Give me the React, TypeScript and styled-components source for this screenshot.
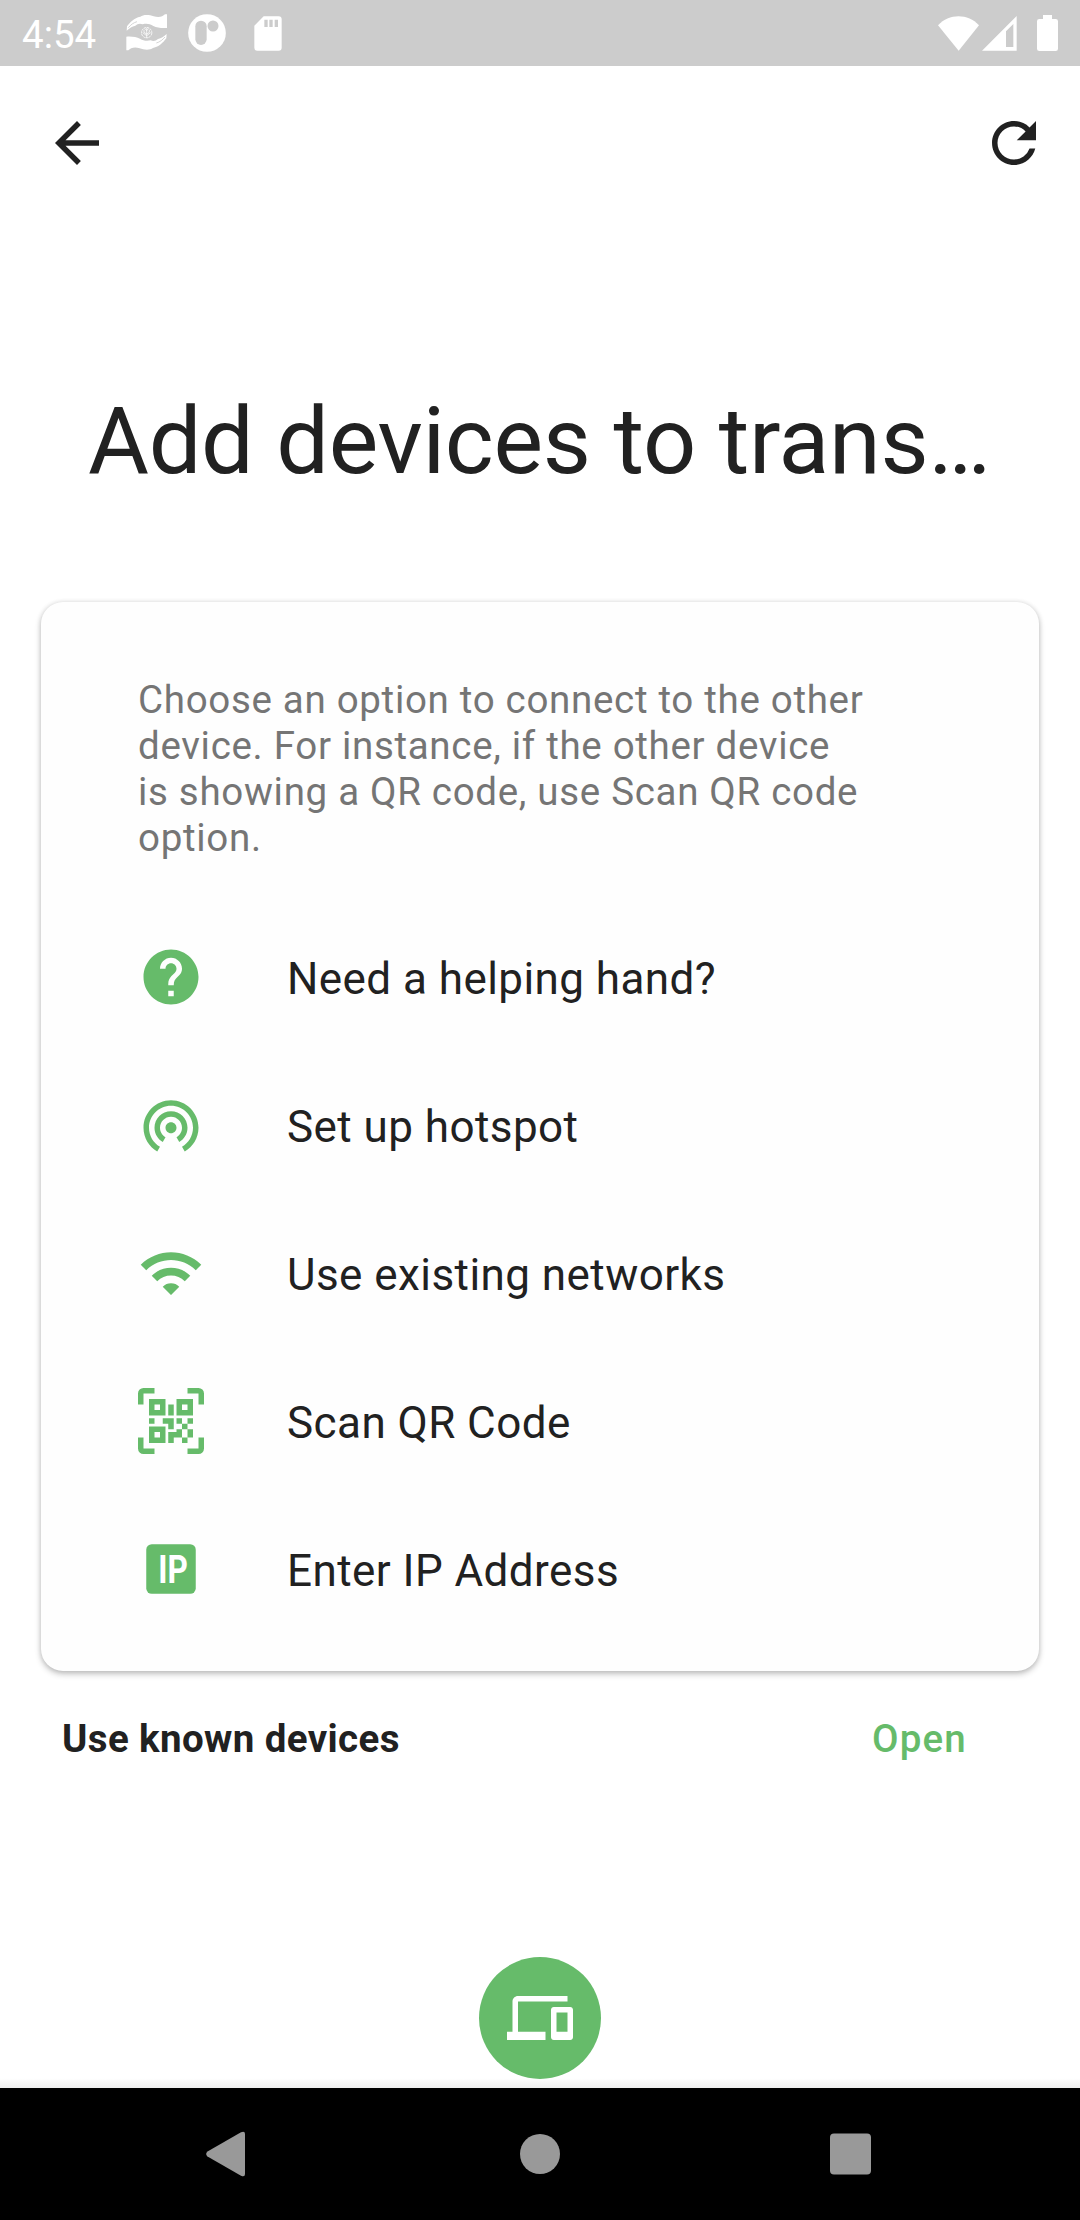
import React from "react";
import styled, { createGlobalStyle } from "styled-components";
import {
  MdArrowBack,
  MdDevices,
  MdHelp,
  MdRefresh,
  MdWifi,
  MdWifiTethering,
} from "react-icons/md";

const GREEN = "#66bb6a";
const INK = "#212121";

const GlobalStyle = createGlobalStyle`
  *, *::before, *::after { box-sizing: border-box; }
  body { margin: 0; background: #fff; }
  button { font: inherit; color: inherit; background: none; border: 0; padding: 0; margin: 0; }
  svg { display: block; flex: none; }
`;

const Screen = styled.div`
  display: flex;
  flex-direction: column;
  width: 1080px;
  height: 2220px;
  background: #fff;
  color: ${INK};
  font-family: Roboto, "Noto Sans", sans-serif;
`;

const StatusBar = styled.header`
  display: flex;
  justify-content: space-between;
  align-items: center;
  height: 66px;
  flex: none;
  padding: 0 22px;
  background: #ccc;
  color: #fff;
`;

const StatusGroup = styled.div`
  display: flex;
  align-items: center;
`;

const Clock = styled.time`
  width: 104px;
  font-size: 38.5px;
  line-height: 66px;
  padding-top: 3px;
`;

const StatusIcon = styled.svg<{ $gap?: number }>`
  margin-left: ${(p) => p.$gap ?? 0}px;
  fill: #fff;
`;

const Toolbar = styled.nav`
  display: flex;
  justify-content: space-between;
  align-items: center;
  height: 154px;
  flex: none;
  padding: 0 33px 0 44px;
`;

const IconButton = styled.button`
  display: flex;
  width: 66px;
  height: 66px;
  font-size: 66px;
`;

const Title = styled.h1`
  margin: 166px 0 0;
  padding-left: 88px;
  height: 110px;
  flex: none;
  font-size: 93.5px;
  line-height: 110px;
  letter-spacing: -0.32px;
  font-weight: 400;
  white-space: nowrap;
`;

const Card = styled.section`
  display: flex;
  flex-direction: column;
  margin: 106px 41px 0;
  height: 1069px;
  flex: none;
  padding: 75px 97px 0;
  border-radius: 22px;
  background: #fefefe;
  box-shadow: 0 3px 6px rgba(0, 0, 0, 0.24), 0 0 5px rgba(0, 0, 0, 0.11);
`;

const Hint = styled.p`
  margin: 0 0 42px;
  font-size: 38.5px;
  line-height: 46px;
  letter-spacing: 0.69px;
  color: #757575;
`;

const OptionList = styled.ul`
  margin: 0;
  padding: 0;
  list-style: none;
`;

const Option = styled.li`
  display: flex;
  align-items: center;
  gap: 83px;
  height: 148px;
`;

const OptionIcon = styled.span`
  display: flex;
  width: 66px;
  font-size: 66px;
  color: ${GREEN};
`;

const OptionLabel = styled.span`
  padding-top: 4px;
  font-size: 44px;
  line-height: 52px;
  letter-spacing: 0.44px;
`;

const KnownDevices = styled.div`
  display: flex;
  justify-content: space-between;
  align-items: center;
  height: 136px;
  flex: none;
  padding: 0 113px 2px 62px;
  font-size: 38.5px;
`;

const KnownLabel = styled.strong`
  font-weight: 700;
  letter-spacing: 0.385px;
`;

const OpenButton = styled.button`
  font-weight: 500;
  letter-spacing: 1.2px;
  color: ${GREEN};
`;

const BottomArea = styled.div`
  display: flex;
  flex: 1;
  justify-content: center;
  align-items: flex-end;
  padding-bottom: 9px;
  background: linear-gradient(to top, #efefef, #fff 10px);
`;

const Fab = styled.button`
  display: flex;
  align-items: center;
  justify-content: center;
  width: 122px;
  height: 122px;
  border-radius: 50%;
  font-size: 66px;
  color: #fff;
  background: ${GREEN};
`;

const SystemNav = styled.footer`
  display: flex;
  align-items: center;
  justify-content: space-between;
  height: 132px;
  flex: none;
  padding: 0 208px 0 204px;
  background: #000;
`;

const NavIcon = styled.svg`
  fill: #999;
`;

const IconText = styled.text`
  font-family: Roboto, sans-serif;
  font-weight: 700;
  font-size: 14px;
  fill: #fff;
`;

const HAND =
  "M2 50 L3 37 C13 24 24 12 43 8 C52 1 70 2 83 7 C99 12 110 8 117 1 H123 V42 C105 43 93 41 82 36 C72 30 62 28 50 31 C41 27 34 30 28 35 C18 37 11 42 2 50Z";

const HandsIcon = () => (
  <StatusIcon width="42" height="38" viewBox="0 0 126 114">
    <path d={HAND} />
    <path d={HAND} transform="rotate(180 62 55)" />
    <path
      d="M33 23 C22 26 14 33 7 41 M91 87 C102 84 110 77 117 69"
      fill="none"
      stroke="#ccc"
      strokeWidth="2.5"
    />
    <circle cx="62" cy="56" r="15.5" fill="none" stroke="#fff" strokeWidth="2.5" strokeDasharray="7 2" />
    <path
      d="M62 42V72M54 47V55L62 60M70 47V55L62 60M50 56L62 65M74 56L62 65M57 44L62 50L67 44"
      fill="none"
      stroke="#fff"
      strokeWidth="2.2"
    />
  </StatusIcon>
);

const ParkingIcon = () => (
  <StatusIcon $gap={20} width="38" height="38" viewBox="0 0 114 114">
    <circle cx="57" cy="57" r="56.5" />
    <rect x="22" y="20" width="34" height="73" rx="17" fill="#ccc" />
    <circle cx="75" cy="36" r="16.5" fill="#ccc" />
  </StatusIcon>
);

const SdCardIcon = () => (
  <StatusIcon $gap={28} width="28" height="35" viewBox="0 0 84 105">
    <path
      fillRule="evenodd"
      d="M29 1H74Q83 1 83 10V95Q83 104 74 104H10Q1 104 1 95V29ZM31 11V33H41V11ZM46 11V33H56V11ZM62 11V33H72V11Z"
    />
  </StatusIcon>
);

const WifiFullIcon = () => (
  <StatusIcon width="41" height="35" viewBox="0 0 123 105">
    <path d="M0 28C33-8 90-8 123 28L62 104Z" />
  </StatusIcon>
);

const SignalIcon = () => (
  <StatusIcon $gap={3} width="35" height="35" viewBox="0 0 105 105">
    <path fillRule="evenodd" d="M104 0V104H0ZM94 24L72 46V93H94Z" />
  </StatusIcon>
);

const BatteryIcon = () => (
  <StatusIcon $gap={20} width="21" height="36" viewBox="0 0 63 108">
    <path d="M18 0H45V12H56Q63 12 63 19V101Q63 108 56 108H7Q0 108 0 101V19Q0 12 7 12H18Z" />
  </StatusIcon>
);

const QrScanIcon = () => (
  <svg width="66" height="66" viewBox="0 0 24 24" fill="currentColor">
    <path d="M4,4H10V10H4V4M20,4V10H14V4H20M14,15H16V13H14V11H16V13H18V11H20V13H18V15H20V18H18V20H16V18H13V20H11V16H14V15M16,15V18H18V15H16M4,20V14H10V20H4M6,6V8H8V6H6M16,6V8H18V6H16M6,16V18H8V16H6M4,11H6V13H4V11M9,11H13V15H11V13H9V11M11,6H13V10H11V6M2,2V6H0V2A2,2 0 0,1 2,0H6V2H2M22,0A2,2 0 0,1 24,2V6H22V2H18V0H22M2,18V22H6V24H2A2,2 0 0,1 0,22V18H2M22,22V18H24V22A2,2 0 0,1 22,24H18V22H22Z" />
  </svg>
);

const IpIcon = () => (
  <svg width="66" height="66" viewBox="0 0 24 24" fill="currentColor">
    <rect x="3" y="3" width="18" height="18" rx="2" />
    <IconText transform="translate(7.4 17) scale(0.82 1)">IP</IconText>
  </svg>
);

const options = [
  { icon: <MdHelp />, label: "Need a helping hand?" },
  { icon: <MdWifiTethering />, label: "Set up hotspot" },
  { icon: <MdWifi />, label: "Use existing networks" },
  { icon: <QrScanIcon />, label: "Scan QR Code" },
  { icon: <IpIcon />, label: "Enter IP Address" },
];

export default function App() {
  return (
    <>
      <GlobalStyle />
      <Screen>
        <StatusBar>
          <StatusGroup>
            <Clock>4:54</Clock>
            <HandsIcon />
            <ParkingIcon />
            <SdCardIcon />
          </StatusGroup>
          <StatusGroup>
            <WifiFullIcon />
            <SignalIcon />
            <BatteryIcon />
          </StatusGroup>
        </StatusBar>
        <Toolbar>
          <IconButton aria-label="Back">
            <MdArrowBack />
          </IconButton>
          <IconButton aria-label="Refresh">
            <MdRefresh />
          </IconButton>
        </Toolbar>
        <Title>Add devices to trans…</Title>
        <Card>
          <Hint>
            Choose an option to connect to the other
            <br />
            device. For instance, if the other device
            <br />
            is showing a QR code, use Scan QR code
            <br />
            option.
          </Hint>
          <OptionList>
            {options.map((o) => (
              <Option key={o.label}>
                <OptionIcon>{o.icon}</OptionIcon>
                <OptionLabel>{o.label}</OptionLabel>
              </Option>
            ))}
          </OptionList>
        </Card>
        <KnownDevices>
          <KnownLabel>Use known devices</KnownLabel>
          <OpenButton>Open</OpenButton>
        </KnownDevices>
        <BottomArea>
          <Fab aria-label="Devices">
            <MdDevices />
          </Fab>
        </BottomArea>
        <SystemNav>
          <NavIcon width="46" height="46" viewBox="0 0 46 46">
            <path d="M3.5 20.5L37 1.2Q41 -0.5 41 3V43Q41 46.5 37 44.8L3.5 25.5Q0.8 23 3.5 20.5Z" />
          </NavIcon>
          <NavIcon width="40" height="40" viewBox="0 0 40 40">
            <circle cx="20" cy="20" r="20" />
          </NavIcon>
          <NavIcon width="42" height="42" viewBox="0 0 42 42">
            <rect x="0" y="0.5" width="41" height="41" rx="4" />
          </NavIcon>
        </SystemNav>
      </Screen>
    </>
  );
}
